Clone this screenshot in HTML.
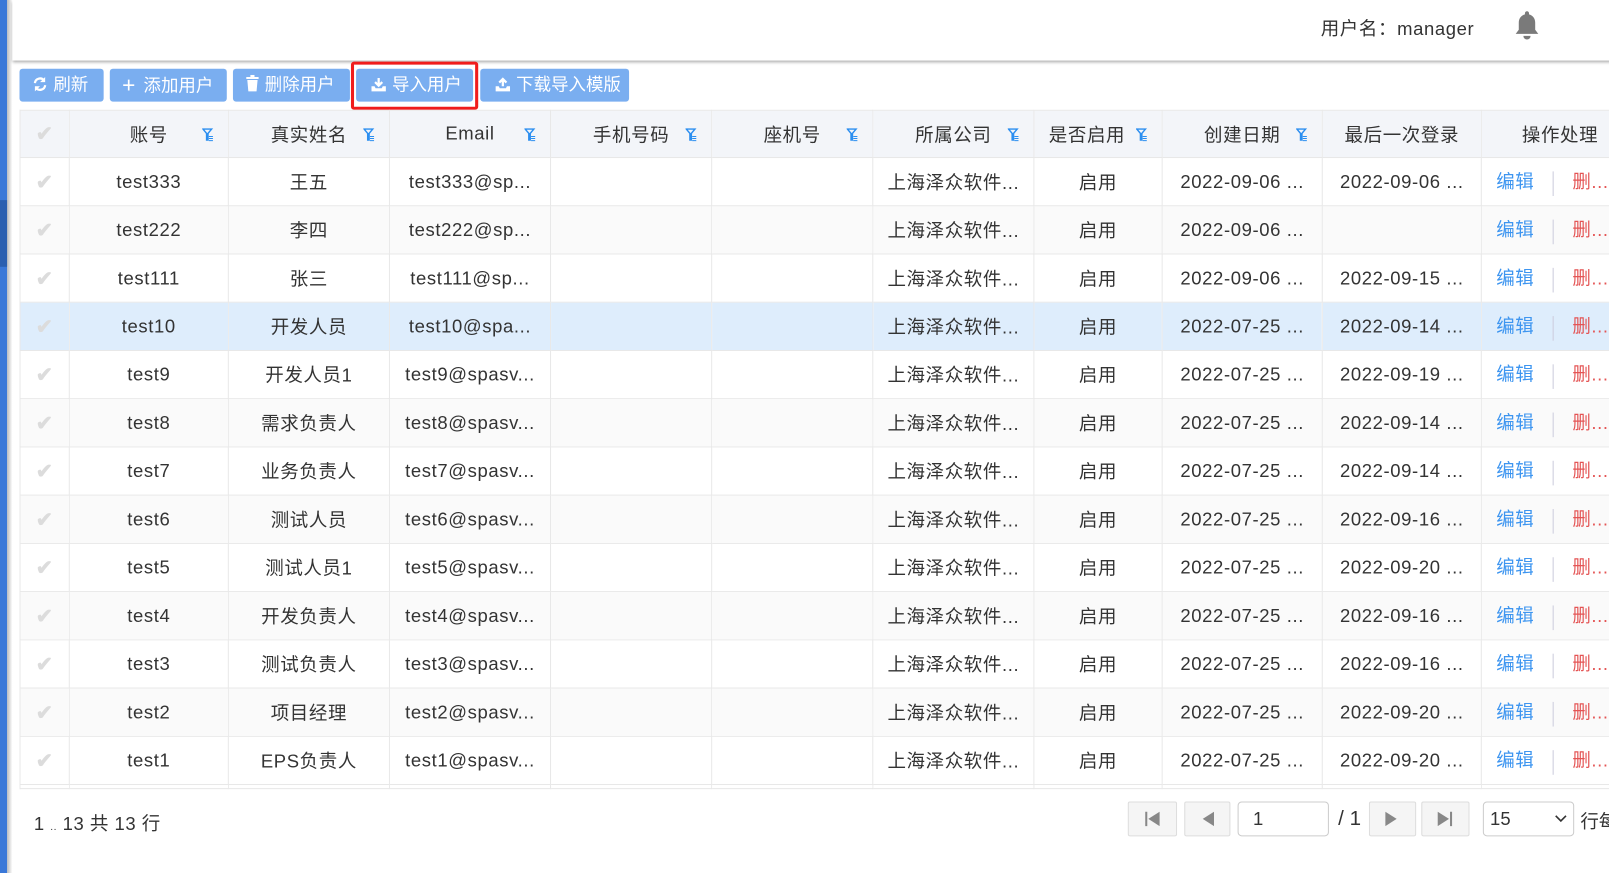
<!DOCTYPE html>
<html><head><meta charset="utf-8"><style>
*{margin:0;padding:0;box-sizing:border-box}
html,body{width:1609px;height:851px;overflow:hidden;background:#fff}
#w{position:absolute;left:0;top:0;width:1568px;height:830px;transform:scale(1.0262);transform-origin:0 0;font-family:"Liberation Sans","Noto Sans CJK SC",sans-serif;color:#333}
.lbar{position:absolute;left:0;top:0;width:7px;height:851px;background:#3a78d8}
.lbar i{position:absolute;left:0;top:195px;width:7px;height:65px;background:#2a5fb0}
.lsh{position:absolute;left:7px;top:0;width:5px;height:851px;background:linear-gradient(90deg,#bbb,#fff)}
.top{position:absolute;left:12px;top:0;width:1597px;height:59px;background:#fff;box-shadow:0 2px 3px rgba(0,0,0,.35)}
.user{position:absolute;left:1275px;top:14px;font-size:18px;color:#333;letter-spacing:.6px}
.btn{position:absolute;top:67px;height:32px;background:#7aaef0;color:#fff;border-radius:3px;font-size:17px;line-height:32px;padding-left:12px;white-space:nowrap}
.btn svg{vertical-align:-2px;margin-right:5px}
.red{position:absolute;left:342px;top:60px;width:124px;height:47px;border:3px solid #f01c1c;border-radius:3px}
table{position:absolute;left:19px;top:107px;border-collapse:collapse;table-layout:fixed;width:1600px}
td,th{border:1px solid #e8e8e8;height:47px;text-align:center;font-size:18px;letter-spacing:.6px;font-weight:normal;white-space:nowrap;overflow:hidden;position:relative}
th{background:#f3f5f9;height:46px}
tr:nth-child(odd) td{background:#fafafa}
tr.sel td{background:#deedfc}
tr.last td{height:4px;background:#fff}
.ck{color:#dcdcdc;font-size:20px;font-weight:bold}
.f{position:absolute;right:14px;top:17px}
.ed{color:#3d95f0}.dl{color:#e45454}
.sep{display:inline-block;width:1px;height:24px;background:#ccd;vertical-align:middle;margin:0 18px}
.foot{position:absolute;left:33px;top:789px;font-size:18px;letter-spacing:.5px}
.pb{position:absolute;top:781px;height:34px;background:#f5f5f5;border:1px solid #ddd;border-radius:2px}
.pi{position:absolute;top:781px;height:34px;border:1px solid #ccc;border-radius:4px;background:#fff;font-size:18px;line-height:32px;padding-left:14px}
</style></head><body><div id="w">
<div class="lbar"><i></i></div><div class="lsh"></div>
<div class="top">
<div class="user">用户名：manager</div>
<svg style="position:absolute;left:1463px;top:10px" width="26" height="30" viewBox="0 0 26 30"><path d="M13 1c-1.2 0-2 .8-2 2v1C7 5 5 8.5 5 12v7l-3 4h22l-3-4v-7c0-3.5-2-7-6-8V3c0-1.2-.8-2-2-2z" fill="#7a7a7a"/><path d="M9.5 25a3.5 3.5 0 0 0 7 0z" fill="#7a7a7a"/></svg>
</div>
<div class="btn" style="left:19px;width:82px"><svg width="16" height="16" viewBox="0 0 16 16"><path d="M3 7a5 5 0 0 1 9-2.5M13 9a5 5 0 0 1-9 2.5" stroke="#fff" stroke-width="2.2" fill="none"/><path d="M13 1v5h-5zM3 15v-5h5z" fill="#fff"/></svg>刷新</div>
<div class="btn" style="left:107px;width:114px"><span style="font-size:22px;margin-right:8px;vertical-align:-1px">+</span>添加用户</div>
<div class="btn" style="left:227px;width:114px"><svg width="14" height="17" viewBox="0 0 14 17"><path d="M1 3h12M5 1h4" stroke="#fff" stroke-width="2"/><path d="M2 5h10l-1 11H3z" fill="#fff"/></svg>删除用户</div>
<div class="btn" style="left:347px;width:114px;padding-left:14px"><svg width="16" height="15" viewBox="0 0 16 15"><path d="M8 1v7M4.5 5l3.5 3.5L11.5 5" stroke="#fff" stroke-width="2.2" fill="none"/><path d="M1 9h3l1 2h6l1-2h3v5H1z" fill="#fff"/></svg>导入用户</div>
<div class="btn" style="left:468px;width:145px;padding-left:14px"><svg width="16" height="15" viewBox="0 0 16 15"><path d="M8 9V2M4.5 5.5L8 2l3.5 3.5" stroke="#fff" stroke-width="2.2" fill="none"/><path d="M1 9h3l1 2h6l1-2h3v5H1z" fill="#fff"/></svg>下载导入模版</div>
<div class="red"></div>
<table>
<colgroup><col style="width:48px"><col style="width:155px"><col style="width:157px"><col style="width:157px"><col style="width:157px"><col style="width:157px"><col style="width:157px"><col style="width:125px"><col style="width:156px"><col style="width:155px"><col style="width:176px"></colgroup>
<tr><th><span class="ck">✔</span></th>
<th>账号<svg class="f" width="11" height="13"><path d="M0.7 0.7h8.6L5.7 5v6.5H4.3V5z" fill="none" stroke="#2b8ef0" stroke-width="1.4"/><path d="M6.5 8h4M6.5 10h4M6.5 12h4" stroke="#2b8ef0"/></svg></th>
<th>真实姓名<svg class="f" width="11" height="13"><path d="M0.7 0.7h8.6L5.7 5v6.5H4.3V5z" fill="none" stroke="#2b8ef0" stroke-width="1.4"/><path d="M6.5 8h4M6.5 10h4M6.5 12h4" stroke="#2b8ef0"/></svg></th>
<th>Email<svg class="f" width="11" height="13"><path d="M0.7 0.7h8.6L5.7 5v6.5H4.3V5z" fill="none" stroke="#2b8ef0" stroke-width="1.4"/><path d="M6.5 8h4M6.5 10h4M6.5 12h4" stroke="#2b8ef0"/></svg></th>
<th>手机号码<svg class="f" width="11" height="13"><path d="M0.7 0.7h8.6L5.7 5v6.5H4.3V5z" fill="none" stroke="#2b8ef0" stroke-width="1.4"/><path d="M6.5 8h4M6.5 10h4M6.5 12h4" stroke="#2b8ef0"/></svg></th>
<th>座机号<svg class="f" width="11" height="13"><path d="M0.7 0.7h8.6L5.7 5v6.5H4.3V5z" fill="none" stroke="#2b8ef0" stroke-width="1.4"/><path d="M6.5 8h4M6.5 10h4M6.5 12h4" stroke="#2b8ef0"/></svg></th>
<th>所属公司<svg class="f" width="11" height="13"><path d="M0.7 0.7h8.6L5.7 5v6.5H4.3V5z" fill="none" stroke="#2b8ef0" stroke-width="1.4"/><path d="M6.5 8h4M6.5 10h4M6.5 12h4" stroke="#2b8ef0"/></svg></th>
<th style="text-align:left;padding-left:14px">是否启用<svg class="f" style="right:14px" width="11" height="13"><path d="M0.7 0.7h8.6L5.7 5v6.5H4.3V5z" fill="none" stroke="#2b8ef0" stroke-width="1.4"/><path d="M6.5 8h4M6.5 10h4M6.5 12h4" stroke="#2b8ef0"/></svg></th>
<th>创建日期<svg class="f" width="11" height="13"><path d="M0.7 0.7h8.6L5.7 5v6.5H4.3V5z" fill="none" stroke="#2b8ef0" stroke-width="1.4"/><path d="M6.5 8h4M6.5 10h4M6.5 12h4" stroke="#2b8ef0"/></svg></th>
<th>最后一次登录</th>
<th style="text-align:left;padding-left:39px">操作处理</th></tr>
<tr><td><span class="ck">✔</span></td><td>test333</td><td>王五</td><td>test333@sp...</td><td></td><td></td><td>上海泽众软件...</td><td>启用</td><td>2022-09-06 ...</td><td>2022-09-06 ...</td><td style="text-align:left;padding-left:14px"><span class="ed">编辑</span><span class="sep"></span><span class="dl">删...</span></td></tr>
<tr><td><span class="ck">✔</span></td><td>test222</td><td>李四</td><td>test222@sp...</td><td></td><td></td><td>上海泽众软件...</td><td>启用</td><td>2022-09-06 ...</td><td></td><td style="text-align:left;padding-left:14px"><span class="ed">编辑</span><span class="sep"></span><span class="dl">删...</span></td></tr>
<tr><td><span class="ck">✔</span></td><td>test111</td><td>张三</td><td>test111@sp...</td><td></td><td></td><td>上海泽众软件...</td><td>启用</td><td>2022-09-06 ...</td><td>2022-09-15 ...</td><td style="text-align:left;padding-left:14px"><span class="ed">编辑</span><span class="sep"></span><span class="dl">删...</span></td></tr>
<tr class="sel"><td><span class="ck">✔</span></td><td>test10</td><td>开发人员</td><td>test10@spa...</td><td></td><td></td><td>上海泽众软件...</td><td>启用</td><td>2022-07-25 ...</td><td>2022-09-14 ...</td><td style="text-align:left;padding-left:14px"><span class="ed">编辑</span><span class="sep"></span><span class="dl">删...</span></td></tr>
<tr><td><span class="ck">✔</span></td><td>test9</td><td>开发人员1</td><td>test9@spasv...</td><td></td><td></td><td>上海泽众软件...</td><td>启用</td><td>2022-07-25 ...</td><td>2022-09-19 ...</td><td style="text-align:left;padding-left:14px"><span class="ed">编辑</span><span class="sep"></span><span class="dl">删...</span></td></tr>
<tr><td><span class="ck">✔</span></td><td>test8</td><td>需求负责人</td><td>test8@spasv...</td><td></td><td></td><td>上海泽众软件...</td><td>启用</td><td>2022-07-25 ...</td><td>2022-09-14 ...</td><td style="text-align:left;padding-left:14px"><span class="ed">编辑</span><span class="sep"></span><span class="dl">删...</span></td></tr>
<tr><td><span class="ck">✔</span></td><td>test7</td><td>业务负责人</td><td>test7@spasv...</td><td></td><td></td><td>上海泽众软件...</td><td>启用</td><td>2022-07-25 ...</td><td>2022-09-14 ...</td><td style="text-align:left;padding-left:14px"><span class="ed">编辑</span><span class="sep"></span><span class="dl">删...</span></td></tr>
<tr><td><span class="ck">✔</span></td><td>test6</td><td>测试人员</td><td>test6@spasv...</td><td></td><td></td><td>上海泽众软件...</td><td>启用</td><td>2022-07-25 ...</td><td>2022-09-16 ...</td><td style="text-align:left;padding-left:14px"><span class="ed">编辑</span><span class="sep"></span><span class="dl">删...</span></td></tr>
<tr><td><span class="ck">✔</span></td><td>test5</td><td>测试人员1</td><td>test5@spasv...</td><td></td><td></td><td>上海泽众软件...</td><td>启用</td><td>2022-07-25 ...</td><td>2022-09-20 ...</td><td style="text-align:left;padding-left:14px"><span class="ed">编辑</span><span class="sep"></span><span class="dl">删...</span></td></tr>
<tr><td><span class="ck">✔</span></td><td>test4</td><td>开发负责人</td><td>test4@spasv...</td><td></td><td></td><td>上海泽众软件...</td><td>启用</td><td>2022-07-25 ...</td><td>2022-09-16 ...</td><td style="text-align:left;padding-left:14px"><span class="ed">编辑</span><span class="sep"></span><span class="dl">删...</span></td></tr>
<tr><td><span class="ck">✔</span></td><td>test3</td><td>测试负责人</td><td>test3@spasv...</td><td></td><td></td><td>上海泽众软件...</td><td>启用</td><td>2022-07-25 ...</td><td>2022-09-16 ...</td><td style="text-align:left;padding-left:14px"><span class="ed">编辑</span><span class="sep"></span><span class="dl">删...</span></td></tr>
<tr><td><span class="ck">✔</span></td><td>test2</td><td>项目经理</td><td>test2@spasv...</td><td></td><td></td><td>上海泽众软件...</td><td>启用</td><td>2022-07-25 ...</td><td>2022-09-20 ...</td><td style="text-align:left;padding-left:14px"><span class="ed">编辑</span><span class="sep"></span><span class="dl">删...</span></td></tr>
<tr><td><span class="ck">✔</span></td><td>test1</td><td>EPS负责人</td><td>test1@spasv...</td><td></td><td></td><td>上海泽众软件...</td><td>启用</td><td>2022-07-25 ...</td><td>2022-09-20 ...</td><td style="text-align:left;padding-left:14px"><span class="ed">编辑</span><span class="sep"></span><span class="dl">删...</span></td></tr>
<tr class="last"><td></td><td></td><td></td><td></td><td></td><td></td><td></td><td></td><td></td><td></td><td></td></tr>
</table>
<div class="foot">1 <span style="font-size:10px">..</span> 13 共 13 行</div>
<div class="pb" style="left:1099px;width:48px"><svg width="48" height="32"><path d="M17 9v14" stroke="#888" stroke-width="2"/><path d="M30 9v14l-11-7z" fill="#888"/></svg></div>
<div class="pb" style="left:1154px;width:45px"><svg width="45" height="32"><path d="M28 9v14l-11-7z" fill="#888"/></svg></div>
<div class="pi" style="left:1206px;width:89px">1</div>
<div style="position:absolute;left:1304px;top:787px;font-size:20px">/ 1</div>
<div class="pb" style="left:1334px;width:46px"><svg width="46" height="32"><path d="M15 9v14l11-7z" fill="#888"/></svg></div>
<div class="pb" style="left:1385px;width:47px"><svg width="47" height="32"><path d="M15 9v14l11-7z" fill="#888"/><path d="M28 9v14" stroke="#888" stroke-width="2"/></svg></div>
<div class="pi" style="left:1445px;width:89px;padding-left:6px">15<svg style="position:absolute;right:6px;top:12px" width="12" height="8"><path d="M1 1l5 5 5-5" stroke="#333" stroke-width="1.6" fill="none"/></svg></div>
<div style="position:absolute;left:1540px;top:787px;font-size:18px;white-space:nowrap">行每</div>
</div></body></html>
